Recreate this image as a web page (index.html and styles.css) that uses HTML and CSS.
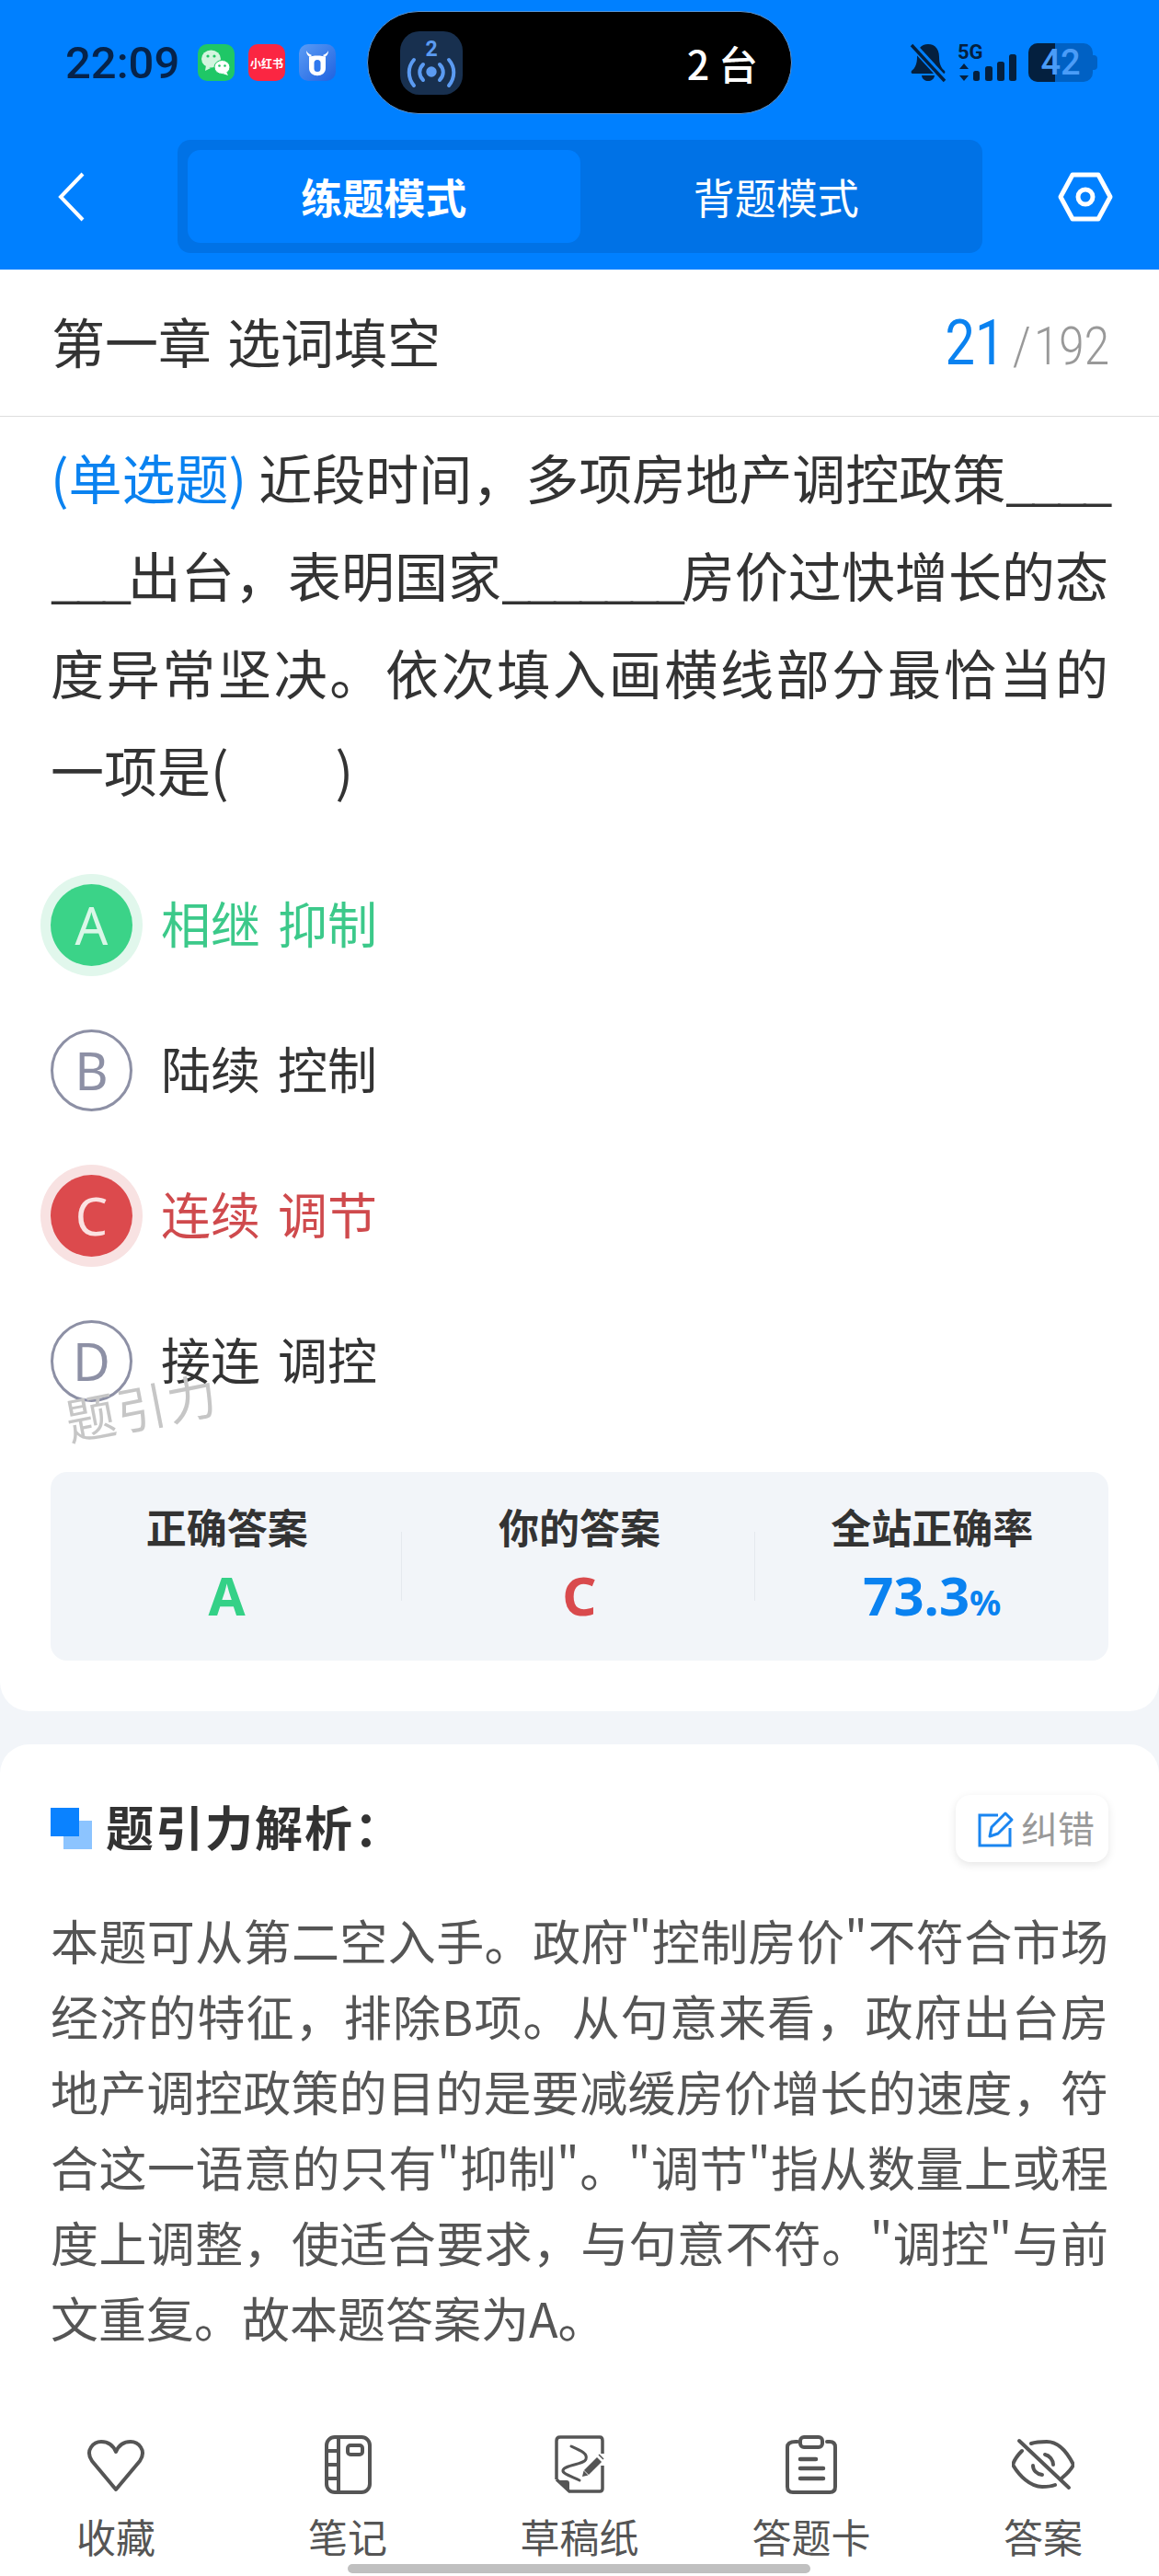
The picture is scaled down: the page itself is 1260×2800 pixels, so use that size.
FILE: index.html
```html
<!DOCTYPE html>
<html lang="zh-CN">
  <head>
    <meta charset="UTF-8" />
    <title>题引力</title>
    <link rel="stylesheet" href="styles.css">
  </head>
  <body>
    <div class="page">
      <header class="header">
        <div class="status">
          <div class="status-left">
            <span class="time">22:09</span>
            <span class="app-icon wechat">
              <svg width="40" height="40" viewBox="0 0 40 40">
                <ellipse cx="14.5" cy="16" rx="10.5" ry="9.5" fill="#d3f5df" />
                <path d="M9 23l-1 6 6-3z" fill="#d3f5df" />
                <ellipse cx="26.5" cy="25" rx="8.5" ry="7.5" fill="#fff" stroke="#1fc766" stroke-width="1" />
                <path d="M31 30l2 4-6-2z" fill="#fff" />
                <circle cx="11" cy="13" r="1.6" fill="#1fc766" />
                <circle cx="18" cy="13" r="1.6" fill="#1fc766" />
                <circle cx="23.5" cy="23.5" r="1.3" fill="#1fc766" />
                <circle cx="29.5" cy="23.5" r="1.3" fill="#1fc766" />
              </svg>
            </span>
            <span class="app-icon xhs">小红书</span>
            <span class="app-icon cow">
              <svg width="40" height="40" viewBox="0 0 40 40">
                <path d="M8 7c0 4 2 6 4 7l2-2c-3-1-5-3-6-5zM32 7c0 4-2 6-4 7l-2-2c3-1 5-3 6-5z" fill="#fff" />
                <path d="M11 14c3-2 15-2 18 0v12c0 11-18 11-18 0z" fill="#fff" />
                <rect x="16.5" y="17" width="7" height="13" rx="3.5" fill="#2f78ee" />
              </svg>
            </span>
          </div>
          <div class="island">
            <span class="island-icon">
              <svg width="68" height="69" viewBox="0 0 68 69">
                <text x="34" y="27" class="island-num">2</text>
                <circle cx="34" cy="44" r="5.7" fill="#5b9bf2" />
                <g fill="none" stroke="#5b9bf2" stroke-width="4" stroke-linecap="round">
                  <path d="M25 36c-5 5-5 12 0 17M43 36c5 5 5 12 0 17" />
                  <path d="M15 31c-7 8-7 19 0 28M53 31c7 8 7 19 0 28" />
                </g>
              </svg>
            </span>
            <span class="island-text">2 台</span>
          </div>
          <div class="status-right">
            <svg class="bell" width="40" height="44" viewBox="0 0 40 44">
              <path d="M20 2c-8 0-12 6-12 14 0 7-2 12-6 15-1 2 0 3 2 3h32c2 0 3-1 2-3-4-3-6-8-6-15C32 8 28 2 20 2z" fill="#04203f" />
              <path d="M13 36c1 8 13 8 14 0z" fill="#04203f" />
              <path d="M3 3l35 38" stroke="#0080ff" stroke-width="8" />
              <path d="M2 3l36 39" stroke="#04203f" stroke-width="3.5" />
            </svg>
            <svg class="signal" width="64" height="44" viewBox="0 0 64 44">
              <text x="0" y="18" class="net">5G</text>
              <path d="M7 23l5 6H2zM7 42l5-6H2z" fill="#04203f" />
              <rect x="17" y="31" width="7" height="11" rx="2.5" fill="#04203f" />
              <rect x="30" y="26" width="8" height="16" rx="2.5" fill="#04203f" />
              <rect x="43" y="21" width="8" height="21" rx="2.5" fill="#04203f" />
              <rect x="56" y="13" width="8" height="29" rx="2.5" fill="#04203f" />
            </svg>
            <span class="battery">
              <span class="battery-fill"></span>
              <span class="battery-num">42</span>
            </span>
          </div>
        </div>
        <nav class="nav">
          <svg class="back" width="30" height="54" viewBox="0 0 30 54">
            <path d="M27 2L3 27l24 25" fill="none" stroke="#fff" stroke-width="4" />
          </svg>
          <div class="tabs">
            <div class="tab active">练题模式</div>
            <div class="tab">背题模式</div>
          </div>
          <svg class="hex" width="60" height="54" viewBox="0 0 60 54">
            <path d="M16 3h28l13 24-13 24H16L3 27z" fill="none" stroke="#fff" stroke-width="5" stroke-linejoin="round" />
            <circle cx="30" cy="27" r="8" fill="none" stroke="#fff" stroke-width="5" />
          </svg>
        </nav>
      </header>

      <section class="card question-card">
        <div class="title-row">
          <h1>第一章 选词填空</h1>
          <div class="progress"><span class="cur">21</span><span class="sep">/</span><span class="total">192</span></div>
        </div>
        <p class="question"><span class="q-type">(单选题)</span> 近段时间，多项房地产调控政策<span class="blank">_______</span>出台，表明国家<span class="blank">_______</span>房价过快增长的态度异常坚决。依次填入画横线部分最恰当的一项是(&emsp;&emsp;)</p>
        <ul class="options">
          <li class="option right"><span class="letter">A</span><span class="opt-text">相继 抑制</span></li>
          <li class="option"><span class="letter">B</span><span class="opt-text">陆续 控制</span></li>
          <li class="option wrong"><span class="letter">C</span><span class="opt-text">连续 调节</span></li>
          <li class="option"><span class="letter">D</span><span class="opt-text">接连 调控</span></li>
        </ul>
        <div class="watermark">题引力</div>
        <div class="stats">
          <div class="stat">
            <div class="stat-label">正确答案</div>
            <div class="stat-value green">A</div>
          </div>
          <div class="stat">
            <div class="stat-label">你的答案</div>
            <div class="stat-value red">C</div>
          </div>
          <div class="stat">
            <div class="stat-label">全站正确率</div>
            <div class="stat-value blue">73.3<small>%</small></div>
          </div>
        </div>
      </section>

      <section class="card analysis-card">
        <div class="analysis-head">
          <h2><span class="squares"><i></i><i></i></span><span class="head-text">题引力解析：</span></h2>
          <div class="report">
            <svg width="40" height="40" viewBox="0 0 40 40">
              <path d="M22 5H2v33h33V19" fill="none" stroke="#1a85f0" stroke-width="3" />
              <path d="M13 28l2-10L30 3l7 7-15 15z" fill="none" stroke="#1a85f0" stroke-width="3" stroke-linejoin="round" />
            </svg>
            <span class="report-text">纠错</span>
          </div>
        </div>
        <p class="analysis">本题可从第二空入手。政府"控制房价"不符合市场经济的特征，排除B项。从句意来看，政府出台房地产调控政策的目的是要减缓房价增长的速度，符合这一语意的只有"抑制"。"调节"指从数量上或程度上调整，使适合要求，与句意不符。"调控"与前文重复。故本题答案为A。</p>
      </section>

      <footer class="toolbar">
        <div class="tool">
          <svg width="66" height="64" viewBox="0 0 66 64">
            <path d="M33 59L7 28C-1 16 9 7 17 7c7 0 13 4 16 11C36 11 42 7 49 7c8 0 18 9 10 21z" fill="none" stroke="#555" stroke-width="4" stroke-linejoin="round" />
          </svg>
          <span>收藏</span>
        </div>
        <div class="tool">
          <svg width="66" height="64" viewBox="0 0 66 64">
            <rect x="10" y="2" width="47" height="60" rx="9" fill="none" stroke="#555" stroke-width="4" />
            <path d="M23 2v60M10 17h13M10 32h13M10 47h13" fill="none" stroke="#555" stroke-width="4" />
            <rect x="33" y="11" width="16" height="10" rx="3" fill="none" stroke="#555" stroke-width="4" />
          </svg>
          <span>笔记</span>
        </div>
        <div class="tool">
          <svg width="66" height="64" viewBox="0 0 66 64">
            <g transform="translate(5 0)">
              <path d="M3 48V6q0-4 4-4h43q3 0 3 4v14M53 33v25q0 3-3 3H17L3 48" fill="none" stroke="#555" stroke-width="3.5" />
              <path d="M3 49h11q3 0 3 3v9z" fill="#555" />
              <path d="M19 12C30 17 37 20 35 26 33 32 12 32 10 38 9 42 20 45 28 49" fill="none" stroke="#555" stroke-width="3" stroke-linecap="round" />
              <path d="M34 38l13-13 4 4-13 13zM32 44l1-4 3 3zM49 21l5 5" fill="#555" stroke="#555" stroke-width="1.5" />
            </g>
          </svg>
          <span>草稿纸</span>
        </div>
        <div class="tool">
          <svg width="66" height="64" viewBox="0 0 66 64">
            <path d="M18 7h-2q-9 0-9 6v43q0 6 6 6h40q6 0 6-6V13q0-6-6-6h-3" fill="none" stroke="#555" stroke-width="4" stroke-linecap="round" />
            <rect x="21" y="2" width="24" height="11" rx="4" fill="none" stroke="#555" stroke-width="4" />
            <path d="M21 26h17M21 36h25M21 47h25" fill="none" stroke="#555" stroke-width="4.5" stroke-linecap="round" />
          </svg>
          <span>答题卡</span>
        </div>
        <div class="tool">
          <svg width="68" height="64" viewBox="0 0 68 64">
            <g transform="translate(0 4)" fill="none" stroke="#555" stroke-width="4" stroke-linecap="round">
              <path d="M21 5C27 3 33 3 38 3 50 3 60 14 67 28 65 33 61 37 55 42" />
              <path d="M47 50C42 52 37 52 33 52 20 52 8 40 1 28 3 22 6 18 11 13" />
              <path d="M36 17C41 18 45 23 45 28M23 29C23 34 27 38 33 39" />
              <path d="M8 2L62 53" />
            </g>
          </svg>
          <span>答案</span>
        </div>
      </footer>
      <div class="home-bar"></div>
    </div>
  </body>
</html>
```

FILE: styles.css
```css
* {
  box-sizing: border-box;
  margin: 0;
  padding: 0;
}
body {
  font-family: "Noto Sans CJK SC", "Noto Sans", sans-serif;
  background-color: #f2f5f9;
  overflow: hidden;
}
.page {
  position: relative;
  width: 1260px;
  height: 2800px;
  display: flex;
  flex-direction: column;
  overflow: hidden;
}

/* header */
.header {
  height: 293px;
  background: #0080ff;
}
.status {
  display: grid;
  grid-template-columns: 399px 462px 1fr;
  padding-top: 12px;
  height: 124px;
}
.status-left {
  display: flex;
  align-items: center;
  padding-left: 71px;
}
.time {
  font-family: Roboto, sans-serif;
  font-size: 49px;
  font-weight: 500;
  color: #06234a;
  width: 144px;
}
.app-icon {
  width: 40px;
  height: 40px;
  border-radius: 10px;
  margin-right: 15px;
  display: flex;
  align-items: center;
  justify-content: center;
  overflow: hidden;
}
.wechat {
  background: #1fc766;
}
.xhs {
  background: #fb2642;
  color: white;
  font-size: 12px;
  font-weight: 700;
  white-space: nowrap;
}
.cow {
  background: linear-gradient(135deg, #5b9cf5, #1f62e0);
}
.island {
  background: #000;
  border: 1px solid #5a93d0;
  border-radius: 56px;
  display: flex;
  align-items: center;
  justify-content: space-between;
  padding: 0 36px 0 35px;
}
.island-icon {
  width: 68px;
  height: 69px;
  border-radius: 21px;
  background: #18304f;
}
.island-num {
  font-family: Roboto, sans-serif;
  font-size: 23px;
  font-weight: 700;
  fill: #5b9bf2;
  text-anchor: middle;
}
.island-text {
  color: white;
  font-size: 43px;
  font-weight: 500;
}
.status-right {
  display: flex;
  align-items: center;
  padding-left: 128px;
  gap: 12px;
}
.net {
  font-family: Roboto, sans-serif;
  font-size: 22px;
  font-weight: 700;
  fill: #04203f;
}
.battery {
  position: relative;
  width: 70px;
  height: 42px;
  margin-left: 1px;
  border-radius: 10px;
  background: #0061c4;
}
.battery::after {
  content: "";
  position: absolute;
  right: -5px;
  top: 13px;
  width: 5px;
  height: 16px;
  border-radius: 0 4px 4px 0;
  background: #0061c4;
}
.battery-fill {
  position: absolute;
  left: 0;
  top: 0;
  bottom: 0;
  width: 29px;
  border-radius: 10px 0 0 10px;
  background: #04203f;
}
.battery-num {
  position: absolute;
  left: 0;
  right: 0;
  top: 0;
  line-height: 42px;
  text-align: center;
  font-family: Roboto, sans-serif;
  font-size: 38px;
  font-weight: 500;
  color: #4a9cf8;
}
.nav {
  display: grid;
  grid-template-columns: 193px 875px 1fr;
  align-items: center;
  margin-top: 28px;
}
.back {
  margin-left: 63px;
}
.hex {
  margin-left: 82px;
}
.tabs {
  height: 123px;
  padding: 11px;
  background: #0072e6;
  border-radius: 14px;
  display: grid;
  grid-template-columns: 1fr 1fr;
}
.tab {
  display: flex;
  align-items: center;
  justify-content: center;
  color: white;
  font-size: 45px;
  border-radius: 14px;
}
.tab.active {
  background: #007fff;
  font-weight: 700;
}

/* question */
.card {
  background: white;
}
.question-card {
  position: relative;
  height: 1567px;
  border-radius: 0 0 32px 32px;
}
.title-row {
  height: 160px;
  display: flex;
  align-items: center;
  justify-content: space-between;
  padding: 0 54px 0 56px;
  border-bottom: 1px solid #ddd;
}
h1 {
  font-size: 58px;
  font-weight: 400;
  color: #333;
  word-spacing: 4px;
  margin-bottom: 6px;
}
.progress {
  font-family: Roboto, sans-serif;
  display: flex;
  align-items: baseline;
  color: #999;
  font-weight: 300;
  transform: scaleX(0.85);
  transform-origin: right center;
}
.cur {
  font-size: 68px;
  color: #0a82f0;
  font-weight: 400;
}
.sep {
  font-size: 58px;
  margin: 0 4px 0 10px;
}
.total {
  font-size: 58px;
}
.question {
  width: 1205px;
  margin-top: 12px;
  padding-left: 55px;
  font-size: 58px;
  line-height: 106px;
  color: #333;
  text-align: justify;
}
.q-type {
  color: #0a82f0;
}
.blank {
  letter-spacing: -4.5px;
  word-break: break-all;
}
.options {
  list-style: none;
  margin-top: 37px;
}
.option {
  height: 158px;
  display: flex;
  align-items: center;
  padding-left: 55px;
  font-size: 54px;
  color: #333;
  word-spacing: 7px;
}
.opt-text {
  margin-bottom: 6px;
}
.letter {
  width: 89px;
  height: 89px;
  margin-right: 31px;
  border-radius: 50%;
  border: 3px solid #8d90a5;
  color: #8d90a5;
  display: flex;
  align-items: center;
  justify-content: center;
  font-family: "Noto Sans", sans-serif;
  font-size: 56px;
  font-weight: 400;
}
.right {
  color: #3cc98a;
}
.right .letter {
  border: none;
  background: #3bd388;
  color: #daf7e8;
  box-shadow: 0 0 0 11px #e1f7ec;
}
.wrong {
  color: #cf4a4d;
}
.wrong .letter {
  border: none;
  background: #dc4a4d;
  color: #fbe2e2;
  box-shadow: 0 0 0 11px #f8e2e2;
}
.watermark {
  position: absolute;
  left: 70px;
  top: 1200px;
  font-size: 54px;
  line-height: 70px;
  color: #c6c6c6;
  letter-spacing: 2px;
  transform: rotate(-11deg);
}
.stats {
  margin: 42px 55px 0;
  height: 205px;
  padding-top: 28px;
  background: #f2f5f9;
  border-radius: 18px;
  display: grid;
  grid-template-columns: repeat(3, 1fr);
  align-items: start;
}
.stat {
  position: relative;
  text-align: center;
}
.stat + .stat::before {
  content: "";
  position: absolute;
  left: -2px;
  top: 37px;
  height: 75px;
  width: 1px;
  background: #e5e9ee;
}
.stat-label {
  font-size: 44px;
  font-weight: 700;
  line-height: 62px;
  color: #333;
}
.stat-value {
  font-family: "Noto Sans", sans-serif;
  font-size: 58px;
  font-weight: 700;
  height: 72px;
  line-height: 72px;
  margin-top: 8px;
}
.stat-value small {
  font-size: 38px;
}
.green {
  color: #34d187;
}
.red {
  color: #d94a4d;
}
.blue {
  color: #0a82f0;
}

/* analysis */
.analysis-card {
  flex: 1;
  margin-top: 36px;
  padding: 55px 55px 0;
  border-radius: 32px 32px 0 0;
}
.analysis-head {
  display: flex;
  align-items: center;
  justify-content: space-between;
  height: 73px;
}
h2 {
  display: flex;
  align-items: center;
  font-size: 52px;
  font-weight: 700;
  letter-spacing: 2px;
  color: #333;
}
.head-text {
  margin-bottom: 6px;
}
.squares {
  position: relative;
  width: 45px;
  height: 45px;
  margin-right: 15px;
}
.squares i {
  position: absolute;
  width: 31px;
  height: 31px;
}
.squares i:first-child {
  left: 14px;
  top: 14px;
  background: #8cc4ff;
}
.squares i:last-child {
  left: 0;
  top: 0;
  background: #0a82ff;
}
.report {
  width: 166px;
  height: 73px;
  display: flex;
  align-items: center;
  padding-left: 24px;
  gap: 7px;
  font-size: 40px;
  color: #999;
  border-radius: 16px;
  box-shadow: 0 3px 10px rgba(0, 0, 0, 0.1);
}
.report-text {
  margin-bottom: 4px;
}
.analysis {
  margin-top: 44px;
  font-size: 52px;
  line-height: 82px;
  color: #555;
  text-align: justify;
}

/* bottom bar */
.toolbar {
  position: absolute;
  left: 0;
  right: 0;
  top: 2647px;
  display: grid;
  grid-template-columns: repeat(5, 1fr);
  text-align: center;
  color: #555;
  font-size: 43px;
}
.tool {
  display: flex;
  flex-direction: column;
  align-items: center;
}
.tool span {
  margin-top: 15px;
  line-height: 60px;
}
.home-bar {
  position: absolute;
  left: 378px;
  bottom: 3px;
  width: 503px;
  height: 10px;
  border-radius: 5px;
  background: #c0c0c0;
}
```
